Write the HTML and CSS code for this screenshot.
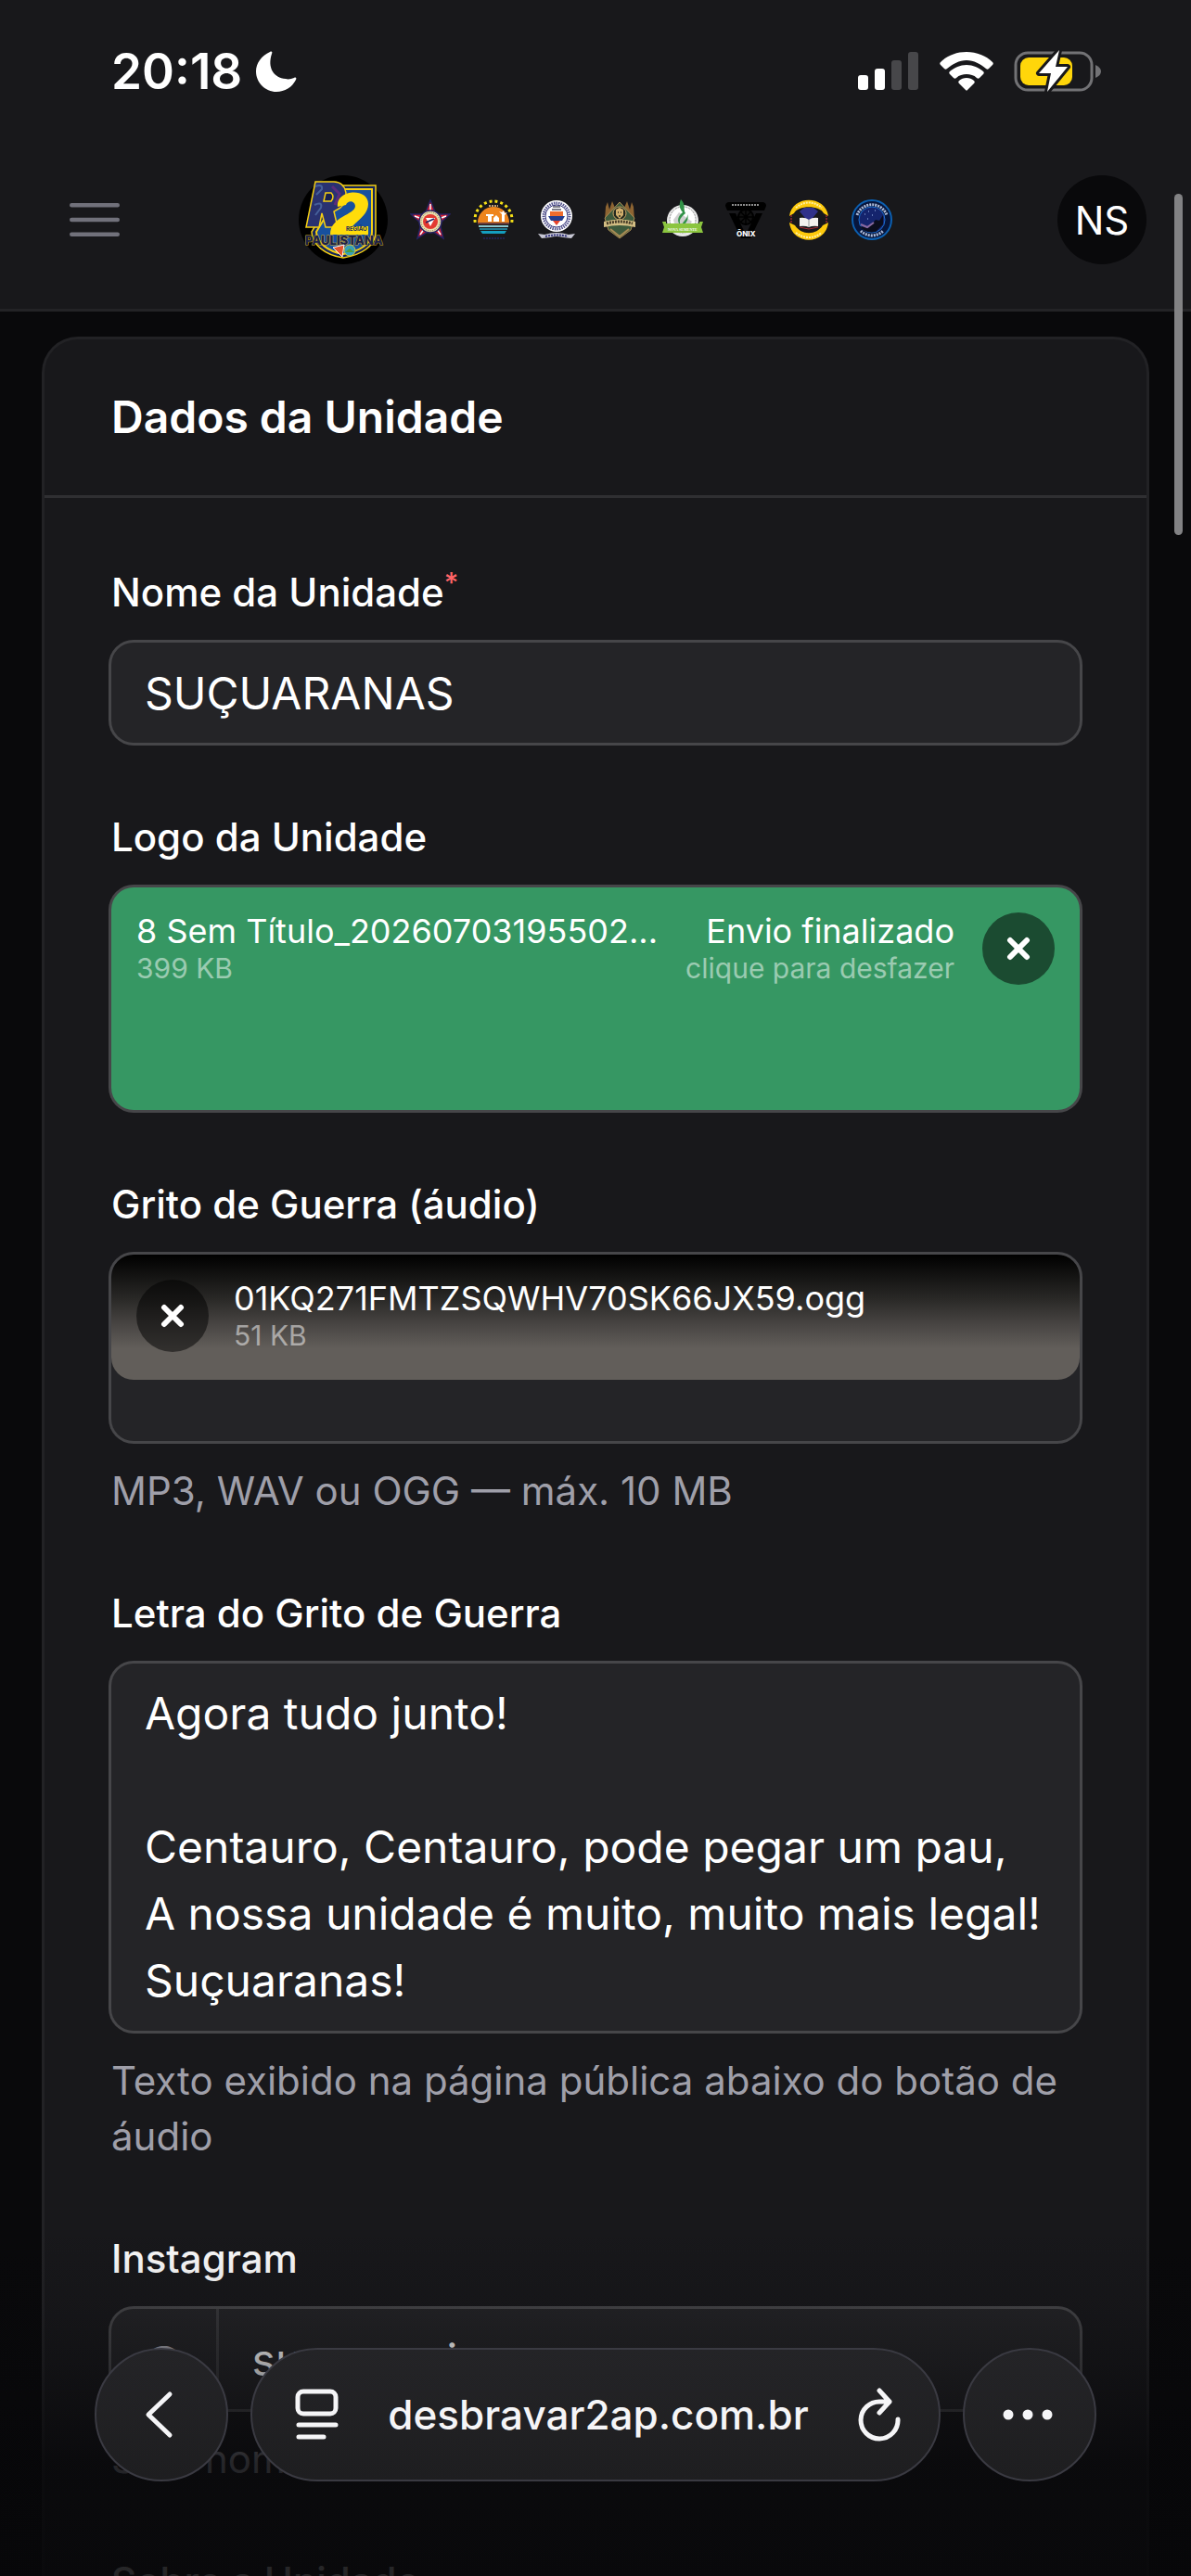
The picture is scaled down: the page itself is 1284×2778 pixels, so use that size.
FILE: index.html
```html
<!DOCTYPE html>
<html lang="pt-BR">
<head>
    <meta charset="UTF-8">
    <meta name="viewport" content="width=device-width, initial-scale=1.0">
    <title>Dados da Unidade</title>
    <link rel="stylesheet" href="styles.css">
</head>
<body>
<div class="screen">
    <!-- Status bar -->
    <div class="status-bar">
        <div class="status-left">
            <span class="clock">20:18</span>
            <svg width="44" height="44" viewBox="0 0 44 44"><path d="M15 1C6 5 0 13 0 22c0 12 10 22 22 22 9 0 17-5 21-13 1-2 0-3-2-2-3 1-6 2-9 1C19 29 12 18 17 3c1-2 0-3-2-2z" fill="#fff"/></svg>
        </div>
        <div class="status-right">
            <svg width="66" height="42" viewBox="0 0 66 42">
                <rect x="0" y="25" width="11" height="16" rx="3" fill="#fff"/>
                <rect x="18" y="18" width="11" height="23" rx="3" fill="#fff"/>
                <rect x="36" y="9" width="11" height="32" rx="3" fill="#47474a"/>
                <rect x="54" y="0" width="11" height="41" rx="3" fill="#47474a"/>
            </svg>
            <svg width="58" height="42" viewBox="0 0 58 42">
                <g fill="#fff">
                    <path d="M29 0C18 0 8 4 1 11c-1 1-1 2 0 3l4 4c1 1 2 1 3 0 6-5 13-9 21-9s15 4 21 9c1 1 2 1 3 0l4-4c1-1 1-2 0-3C50 4 40 0 29 0z"/>
                    <path d="M29 14c-7 0-13 3-18 7-1 1-1 2 0 3l4 4c1 1 2 1 3 0 3-3 7-4 11-4s8 1 11 4c1 1 2 1 3 0l4-4c1-1 1-2 0-3-5-4-11-7-18-7z"/>
                    <path d="M29 28c-3 0-6 1-8 3-1 1-1 2 0 3l7 7c1 1 1 1 2 0l7-7c1-1 1-2 0-3-2-2-5-3-8-3z"/>
                </g>
            </svg>
            <svg width="94" height="46" viewBox="0 -1 94 46">
                <rect x="2" y="2" width="82" height="40" rx="13" fill="none" stroke="#727275" stroke-width="3"/>
                <path d="M88 15c4 2 6 4 6 7s-2 5-6 7z" fill="#727275"/>
                <rect x="7" y="7" width="56" height="30" rx="9" fill="#ffd60a"/>
                <path d="M49-1L27 24h13l-4 20 22-27H45z" fill="#fff" stroke="#18181b" stroke-width="6" stroke-linejoin="round" paint-order="stroke"/>
            </svg>
        </div>
    </div>

    <!-- Top navigation -->
    <header class="topbar">
        <button class="menu-btn" aria-label="Menu">
            <svg width="72" height="72" viewBox="0 0 24 24" fill="none" stroke="#71717b" stroke-width="1.5" stroke-linecap="round"><path d="M3.75 6.75h16.5M3.75 12h16.5M3.75 17.25h16.5"/></svg>
        </button>
        <div class="clubs">
            <!-- R2 Paulistana -->
            <svg width="96" height="96" viewBox="0 0 96 96">
                <circle cx="48" cy="48" r="48" fill="#000"/>
                <path d="M44 11h39v50c0 15-15 25-35 28-20-3-33-14-34-28z" fill="#14255c" stroke="#f5cf13" stroke-width="1.5"/>
                <path d="M47 15h32v46c0 13-13 21-31 24-17-3-28-12-29-24z" fill="#17509e" stroke="#f5cf13" stroke-width="2"/>
                <path d="M18 7h20c15 0 17 21 7 28l-7 4 4 17H29l-4-15-3 15H8z" fill="#293270" stroke="#f5cf13" stroke-width="1.5"/>
                <path d="M29 19h6q4 4 0 9h-8z" fill="#18204f" stroke="#f5cf13" stroke-width="1.5"/>
                <path d="M18 12q8-3 7 3l-6 6M17 32q9-4 7 3l-6 8" fill="none" stroke="#46609a" stroke-width="2"/>
                <path d="M36 12l8 8-5 12" fill="none" stroke="#5a2c7c" stroke-width="3"/>
                <path d="M42 34c-2-19 33-21 33-3 0 10-9 16-17 24h17v9H34c0-20 27-21 27-31-1-6-8-6-10-1z" fill="#ffdc0a"/>
                <text x="51" y="60" class="r2-region">REGIÃO</text>
                <text x="7" y="75" class="r2-name">PAULISTANA</text>
                <path d="M37 78l12-3-2 13z" fill="#e4532b" stroke="#fff" stroke-width="1"/>
                <circle cx="55" cy="81" r="6" fill="#35a0b9" stroke="#d7c53b" stroke-width="1"/>
                <path d="M50 83l5-4 5 4z" fill="#4c9d3f"/>
            </svg>
            <!-- Star -->
            <svg width="44" height="44" viewBox="0 0 44 44">
                <path d="M22 1l6 15h15L32 26l4 16-14-9-14 9 4-16L1 16h15z" fill="#d91f35" stroke="#262261" stroke-width="1.5"/>
                <path d="M22 5v8M5 18l8 3M39 18l-8 3M11 38l4-6M33 38l-4-6" stroke="#fff" stroke-width="1.5"/>
                <circle cx="22" cy="24" r="12" fill="#e9dfae" stroke="#262261" stroke-width="1.5"/>
                <circle cx="22" cy="24" r="10" fill="none" stroke="#766b54" stroke-dasharray="1 1.5"/>
                <circle cx="22" cy="24" r="8" fill="#e33931"/>
                <path d="M17 20h10l-5 9z" fill="#fff"/>
                <path d="M17 25l9-4" stroke="#262261" stroke-width="1.5"/>
            </svg>
            <!-- Sun over the sea -->
            <svg width="44" height="44" viewBox="0 0 44 44">
                <circle cx="22" cy="22" r="20" fill="none" stroke="#f4df17" stroke-width="3" stroke-dasharray="3 3" pathLength="126"/>
                <path d="M0 27h44v17H0z" fill="#18181b"/>
                <path d="M5 25a17 17 0 1 1 34 0z" fill="#ee851e"/>
                <path d="M17 7h10" stroke="#f9c994" stroke-width="1.5" stroke-dasharray="2 1"/>
                <path d="M14 16h8v2h-2v6h-4v-6h-2zM22 24v-4l3-3 3 3v4zM31 24v-8l-3-3 3 1 2-2 1 3 3-1-3 3v7z" fill="#fff"/>
                <path d="M5 25h34v2H5z" fill="#6e3d3a"/>
                <path d="M6 29h32" stroke="#8cc4cc" stroke-width="2"/>
                <path d="M7 32h30" stroke="#1f7892" stroke-width="2"/>
                <path d="M8 34h28l-2 3H10z" fill="#149dbe"/>
                <path d="M11 42h24" stroke="#20204b" stroke-width="2" stroke-dasharray="2 1"/>
            </svg>
            <!-- Ship -->
            <svg width="44" height="44" viewBox="0 0 44 44">
                <circle cx="22" cy="18" r="17" fill="#fff"/>
                <circle cx="22" cy="18" r="14" fill="none" stroke="#55558e" stroke-width="3" stroke-dasharray="1.5 1"/>
                <circle cx="22" cy="18" r="12" fill="#fff" stroke="#33337a" stroke-width="1"/>
                <path d="M18 8h8M17 11h10" stroke="#556" stroke-width="1.5"/>
                <path d="M15 13h14v5H15z" fill="#ef6c2e"/>
                <path d="M13 18h18l-3 5H16z" fill="#253d8d"/>
                <path d="M18 23h8l-4 5z" fill="#e7422c"/>
                <path d="M2 37l7 1q13-4 26 0l7-1-4 5-9-1q-7-2-14 0l-9 1z" fill="#c7c7d4"/>
                <path d="M10 40q12-3 24 0" fill="none" stroke="#33337a" stroke-width="2" stroke-dasharray="2 1"/>
            </svg>
            <!-- Lion -->
            <svg width="44" height="44" viewBox="0 0 44 44">
                <path d="M6 22l1-14 2-5 2 8 3-9 3 7 5-6 5 6 3-7 3 9 2-8 2 5 1 14z" fill="#8d6432"/>
                <path d="M22 3l16 17-4 13-12 9-12-9-4-13z" fill="#3d5a3c" stroke="#a98b54" stroke-width="1"/>
                <circle cx="22" cy="15" r="7" fill="#23281e" stroke="#c4a265" stroke-width="1"/>
                <path d="M18 11l4-2 4 2v6l-4 4-4-4z" fill="#d0af6c"/>
                <path d="M20 14h1M23 14h1M21 18h2" stroke="#2c2a1c" stroke-width="1.5"/>
                <path d="M5 24q17-5 34 0v6q-17-4-34 0z" fill="#d2bd83"/>
                <path d="M8 26q14-4 28 0" fill="none" stroke="#443a26" stroke-width="3" stroke-dasharray="2 1"/>
                <path d="M12 32l10 8 10-8" fill="none" stroke="#a98b54" stroke-width="2"/>
            </svg>
            <!-- Nova Semente -->
            <svg width="44" height="44" viewBox="0 0 44 44">
                <circle cx="22" cy="23" r="17" fill="#e8e8e8"/>
                <circle cx="22" cy="22" r="14" fill="#fff" stroke="#8b8b8b" stroke-width="1" stroke-dasharray="2 1"/>
                <path d="M12 22l6-8 14 10-4 6H14z" fill="#cfcfcf"/>
                <path d="M20 0c6 6 2 10 5 15-7 6-7 8-5 14-5-6-3-11 2-15-4-5-4-8-2-14zM27 16c1 5-6 8-6 13 5-3 8-8 6-13z" fill="#329247"/>
                <path d="M0 24h4v2h36v-2h4l-2 6 2 6H0l2-6z" fill="#8bc53f"/>
                <text x="6" y="34" class="seed-text">NOVA SEMENTE</text>
            </svg>
            <!-- Ônix -->
            <svg width="44" height="44" viewBox="0 0 44 44">
                <path d="M3 3h38q3 1 3 4l-2 5H2L0 7q0-3 3-4z" fill="#000"/>
                <path d="M7 6h30" stroke="#8d8d8d" stroke-width="2" stroke-dasharray="2 1"/>
                <path d="M4 15h7l11 23 11-23h7L27 42H17z" fill="#000"/>
                <circle cx="22" cy="19" r="8" fill="#111" stroke="#000" stroke-width="2"/>
                <path d="M22 10v18M13 19h18M16 13l12 12M28 13L16 25" stroke="#000" stroke-width="1.5"/>
                <text x="12" y="40" class="onix-text">ÔNIX</text>
            </svg>
            <!-- Book -->
            <svg width="44" height="44" viewBox="0 0 44 44">
                <path d="M1 18C4-5 40-5 43 18l-5-3C34 6 10 6 6 15zM1 25l6 3c7 11 23 11 30 0l6-3c-3 25-39 25-42 0z" fill="#fdc90b"/>
                <path d="M8 9q14-11 28 0M8 36q14 10 28 0" fill="none" stroke="#fff0a4" stroke-width="2" stroke-dasharray="2 1"/>
                <path d="M3 17v8M41 17v8" stroke="#76232b" stroke-width="2" stroke-dasharray="2 1"/>
                <path d="M17 9h10l5 4-10 12-10-12z" fill="#30318a"/>
                <path d="M12 20q6-1 10 2 4-3 10-2v9q-6-1-10 1-4-2-10-1z" fill="#f3f1ee"/>
                <path d="M22 22v8" stroke="#999" stroke-width="1"/>
                <path d="M12 30l10 2 10-2" fill="none" stroke="#a42832" stroke-width="1"/>
            </svg>
            <!-- Pegasus -->
            <svg width="44" height="44" viewBox="0 0 44 44">
                <circle cx="22" cy="22" r="21" fill="#07163d" stroke="#0c5fb0" stroke-width="2"/>
                <path d="M6 17A17 17 0 0 1 38 17M10 34a17 17 0 0 0 24 0" fill="none" stroke="#aebddb" stroke-width="3" stroke-dasharray="2 1"/>
                <circle cx="22" cy="22" r="14" fill="#15246d" stroke="#1b6fd0" stroke-width="1"/>
                <path d="M9 29l9 2 8-9 4 1 4-6v10l-8 8q-12 2-17-6z" fill="#0b0d1d"/>
                <path d="M10 27l7 3 7-5" stroke="#8b6aa0" stroke-width="2" fill="none"/>
                <path d="M14 16h1M18 13h1M22 17h1M17 21h1M25 12h1" stroke="#a9c4f5" stroke-width="1"/>
            </svg>
        </div>
        <button class="avatar">NS</button>
    </header>

    <main class="content">
        <section class="card">
            <div class="card-header"><h1>Dados da Unidade</h1></div>
            <form class="card-body">
                <div class="field">
                    <label for="nome">Nome da Unidade<sup>*</sup></label>
                    <input id="nome" class="control" type="text" value="SUÇUARANAS">
                </div>

                <div class="field">
                    <span class="label">Logo da Unidade</span>
                    <div class="control upload upload-done">
                        <div class="file-item">
                            <div class="file-info">
                                <span class="file-main">8 Sem Título_20260703195502...</span>
                                <span class="file-sub">399 KB</span>
                            </div>
                            <div class="file-status">
                                <span class="file-main">Envio finalizado</span>
                                <span class="file-sub">clique para desfazer</span>
                            </div>
                            <button type="button" class="file-btn" aria-label="Remover">
                                <svg width="26" height="26" viewBox="0 0 26 26" stroke="#fff" stroke-width="6" stroke-linecap="round"><path d="M4 4l18 18M22 4L4 22"/></svg>
                            </button>
                        </div>
                    </div>
                </div>

                <div class="field">
                    <span class="label">Grito de Guerra (áudio)</span>
                    <div class="control upload upload-audio">
                        <div class="file-item file-item-audio">
                            <button type="button" class="file-btn" aria-label="Remover">
                                <svg width="26" height="26" viewBox="0 0 26 26" stroke="#fff" stroke-width="6" stroke-linecap="round"><path d="M4 4l18 18M22 4L4 22"/></svg>
                            </button>
                            <div class="file-info">
                                <span class="file-main">01KQ271FMTZSQWHV70SK66JX59.ogg</span>
                                <span class="file-sub">51 KB</span>
                            </div>
                        </div>
                    </div>
                    <p class="hint">MP3, WAV ou OGG — máx. 10 MB</p>
                </div>

                <div class="field">
                    <label for="letra">Letra do Grito de Guerra</label>
                    <textarea id="letra" class="control" rows="5">Agora tudo junto!

Centauro, Centauro, pode pegar um pau,
A nossa unidade é muito, muito mais legal!
Suçuaranas!</textarea>
                    <p class="hint">Texto exibido na página pública abaixo do botão de áudio</p>
                </div>

                <div class="field">
                    <label for="instagram">Instagram</label>
                    <div class="control input-group">
                        <span class="prefix">@</span>
                        <input id="instagram" type="text" value="sucuaranias">
                    </div>
                    <p class="hint">Só o nome de usuário, sem o @</p>
                </div>

                <div class="field">
                    <label for="sobre">Sobre a Unidade</label>
                    <textarea id="sobre" class="control" rows="5"></textarea>
                </div>
            </form>
        </section>
    </main>

    <div class="scrollbar"></div>

    <!-- Browser controls -->
    <div class="bottom-fade"></div>
    <nav class="browser-bar">
        <button class="glass round" aria-label="Voltar">
            <svg width="36" height="52" viewBox="0 0 36 52" fill="none" stroke="#f5f5f7" stroke-width="5" stroke-linecap="round" stroke-linejoin="round"><path d="M27 4L4 26l23 22"/></svg>
        </button>
        <div class="glass address">
            <button class="icon-btn" aria-label="Página">
                <svg width="48" height="56" viewBox="0 0 48 56" fill="none" stroke="#f5f5f7" stroke-width="5" stroke-linecap="round"><rect x="3" y="3" width="41" height="24" rx="6"/><path d="M4 39h40M4 52h27"/></svg>
            </button>
            <span class="url">desbravar2ap.com.br</span>
            <button class="icon-btn" aria-label="Recarregar">
                <svg width="48" height="58" viewBox="0 0 48 58" fill="none" stroke="#f5f5f7" stroke-width="5" stroke-linecap="round" stroke-linejoin="round"><path d="M35 15H25A20 20 0 1 0 44 34M24 3l11 12-11 12"/></svg>
            </button>
        </div>
        <button class="glass round" aria-label="Mais">
            <svg width="58" height="12" viewBox="0 0 58 12" fill="#f5f5f7"><circle cx="6" cy="6" r="5.5"/><circle cx="27" cy="6" r="5.5"/><circle cx="48" cy="6" r="5.5"/></svg>
        </button>
    </nav>
</div>
</body>
</html>
```

FILE: styles.css
```css
* {
    box-sizing: border-box;
}

body {
    margin: 0;
    background: #09090b;
    color: #fff;
    font-family: Inter, "Liberation Sans", sans-serif;
}

button,
input,
textarea {
    font: inherit;
    color: inherit;
    border: none;
    background: none;
    padding: 0;
    margin: 0;
}

svg {
    display: block;
    flex-shrink: 0;
}

.screen {
    position: relative;
    height: 100vh;
    overflow: hidden;
}

/* Status bar */
.status-bar {
    display: flex;
    justify-content: space-between;
    align-items: center;
    height: 141px;
    padding: 12px 97px 0 120px;
    background: #18181b;
}

.status-left {
    display: flex;
    align-items: center;
    gap: 15px;
}

.clock {
    font-size: 53px;
    font-weight: 600;
}

.status-right {
    display: flex;
    align-items: center;
    gap: 22px;
}

/* Top navigation */
.topbar {
    display: flex;
    justify-content: space-between;
    align-items: center;
    height: 195px;
    padding: 0 48px;
    background: #18181b;
    border-bottom: 3px solid #232326;
}

.menu-btn {
    display: flex;
    justify-content: center;
    width: 108px;
}

.clubs {
    display: flex;
    align-items: center;
    gap: 24px;
}

.r2-region {
    font-size: 6px;
    font-weight: 700;
    fill: #14255c;
}

.r2-name {
    font-size: 13px;
    font-weight: 800;
    fill: #1c2148;
    stroke: #c8a626;
    stroke-width: 1;
    paint-order: stroke;
}

.seed-text {
    font-family: "Liberation Serif", serif;
    font-size: 4px;
    font-weight: 700;
    fill: #fff;
}

.onix-text {
    font-size: 8px;
    font-weight: 800;
    fill: #fff;
}

.avatar {
    width: 96px;
    height: 96px;
    margin-left: 12px;
    border-radius: 50%;
    background: #09090b;
    font-size: 42px;
}

/* Card */
.content {
    padding: 30px 48px;
}

.card {
    border-radius: 36px;
    background: #18181b;
    box-shadow: 0 0 0 3px #222225;
}

.card-header {
    padding: 48px 72px;
    border-bottom: 3px solid #2f2f32;
}

.card-header h1 {
    margin: 0;
    font-size: 48px;
    line-height: 72px;
    font-weight: 600;
}

.card-body {
    display: flex;
    flex-direction: column;
    gap: 72px;
    padding: 72px;
}

.field {
    display: flex;
    flex-direction: column;
    gap: 24px;
}

.field label,
.label {
    font-size: 42px;
    line-height: 60px;
    font-weight: 500;
}

.field sup {
    font-size: 30px;
    line-height: 0;
    color: #ff6467;
}

.control {
    width: 100%;
    border-radius: 24px;
    background: #242427;
    box-shadow: 0 0 0 3px #464649;
    font-size: 48px;
}

input.control {
    height: 108px;
    padding: 0 36px;
}

textarea.control {
    display: block;
    padding: 18px 36px;
    line-height: 72px;
    resize: none;
    overflow: hidden;
}

.hint {
    margin: 0;
    font-size: 42px;
    line-height: 60px;
    color: #9f9fa9;
}

/* File upload */
.upload {
    overflow: hidden;
}

.upload-done {
    height: 240px;
    background: #369763;
}

.upload-audio {
    height: 201px;
}

.file-item {
    display: flex;
    gap: 27px;
    padding: 27px;
}

.file-item-audio {
    padding-bottom: 30px;
    border-radius: 24px;
    background: linear-gradient(#000, #292826 35%, #474442 55%, #625e5a 75%);
}

.file-info,
.file-status {
    display: flex;
    flex-direction: column;
    min-width: 0;
    white-space: nowrap;
}

.file-info {
    flex: 1;
}

.file-status {
    flex-shrink: 0;
    align-items: flex-end;
    padding-right: 3px;
}

.file-main {
    font-size: 36px;
    line-height: 40px;
}

.file-sub {
    font-size: 30px;
    line-height: 40px;
    color: rgba(255, 255, 255, 0.5);
}

.file-btn {
    display: flex;
    align-items: center;
    justify-content: center;
    flex-shrink: 0;
    width: 78px;
    height: 78px;
    border-radius: 50%;
    background: rgba(0, 0, 0, 0.5);
}

.file-info,
.file-status {
    height: 78px;
}

/* Input with prefix */
.input-group {
    display: flex;
    height: 108px;
}

.prefix {
    display: flex;
    align-items: center;
    padding: 0 36px;
    border-right: 3px solid #39393c;
    font-size: 42px;
    color: #9f9fa9;
}

.input-group input {
    flex: 1;
    min-width: 0;
    padding: 0 36px;
}

/* Page scroll indicator */
.scrollbar {
    position: absolute;
    top: 209px;
    right: 9px;
    width: 9px;
    height: 368px;
    border-radius: 5px;
    background: #828284;
}

/* Browser controls */
.bottom-fade {
    position: absolute;
    left: 0;
    right: 0;
    bottom: 0;
    height: 378px;
    background: linear-gradient(rgba(7, 7, 9, 0), rgba(7, 7, 9, 0.15) 24%, rgba(7, 7, 9, 0.4) 42%, rgba(7, 7, 9, 0.8) 68%, rgba(7, 7, 9, 0.88));
}

.browser-bar {
    position: absolute;
    left: 102px;
    right: 102px;
    bottom: 102px;
    display: flex;
    gap: 24px;
}

.glass {
    display: flex;
    align-items: center;
    height: 144px;
    border: 2px solid #3a3a42;
    border-radius: 72px;
    background: linear-gradient(#242427, #1e1e20);
}

.round {
    justify-content: center;
    width: 144px;
    flex-shrink: 0;
}

.address {
    flex: 1;
    justify-content: space-between;
    padding: 0 40px 0 46px;
}

.icon-btn {
    display: flex;
}

.url {
    font-size: 44px;
    font-weight: 500;
    color: #f5f5f7;
}
```
